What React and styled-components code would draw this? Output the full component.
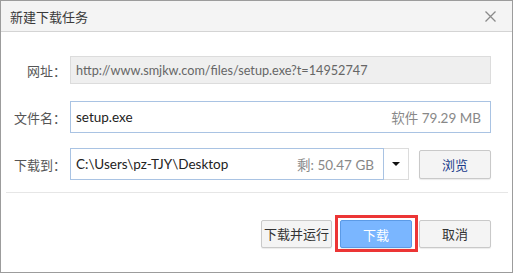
import styled, { createGlobalStyle } from "styled-components";

const Global = createGlobalStyle`
  html, body {
    margin: 0;
    padding: 0;
    background: #ffffff;
  }
  body {
    font-family: "Lato", "Noto Sans CJK SC", sans-serif;
    font-size: 13px;
  }
`;

const Dialog = styled.div`
  width: 511px;
  height: 271px;
  border: 1px solid #9c9c9c;
  background: #fff;
  display: flex;
  flex-direction: column;
`;

const Header = styled.div`
  height: 30px;
  background: #f4f4f4;
  border-bottom: 1px solid #d4d4d4;
  display: flex;
  align-items: center;
  justify-content: space-between;
  padding: 0 16px 0 9px;
`;

const Title = styled.div`
  color: #3a3a3a;
  font-size: 13px;
  font-family: "Noto Sans CJK SC", sans-serif;
`;

const Close = styled.div`
  width: 11px;
  height: 11px;
  display: flex;
  color: #8a8a8a;
`;

const Form = styled.div`
  padding: 24px 21px 0 0;
  display: flex;
  flex-direction: column;
`;

const Row = styled.div`
  display: flex;
  align-items: center;
  height: ${p => p.h}px;
  margin-bottom: ${p => p.mb || 0}px;
`;

const Label = styled.div`
  width: 69px;
  flex: none;
  text-align: right;
  padding-right: 4px;
  box-sizing: border-box;
  color: #555;
  font-family: "Noto Sans CJK SC", sans-serif;
  font-size: 13px;
`;

const Field = styled.div`
  flex: 1;
  height: 100%;
  box-sizing: border-box;
  display: flex;
  align-items: center;
  justify-content: space-between;
  padding: 0 9px 0 5px;
  border: 1px solid ${p => (p.disabled ? "#dcdcdc" : "#a9c3e3")};
  background: ${p => (p.disabled ? "#efefef" : "#fff")};
  color: ${p => (p.disabled ? "#666" : "#222")};
  font-size: ${p => (p.disabled ? 12.7 : 13.5)}px;
`;

const Info = styled.span`
  color: #888;
`;

const Select = styled.div`
  width: 25px;
  height: 100%;
  box-sizing: border-box;
  border: 1px solid #dcdcdc;
  border-left: none;
  display: flex;
  align-items: center;
  justify-content: center;
`;

const Arrow = styled.div`
  width: 0;
  height: 0;
  border-left: 4px solid transparent;
  border-right: 4px solid transparent;
  border-top: 4px solid #111;
`;

const Button = styled.button`
  width: ${p => p.w || 72}px;
  height: ${p => p.h || 28}px;
  box-sizing: border-box;
  border: 1px solid ${p => (p.primary ? "#5b9ae6" : "#c9c9c9")};
  border-radius: 2px;
  background: ${p => (p.primary ? "#7ab6ff" : "#f4f4f4")};
  color: ${p => (p.primary ? "#fff" : "#333")};
  font-family: "Noto Sans CJK SC", sans-serif;
  font-size: 13px;
  padding: 0;
  box-shadow: 0 1px 1px rgba(0, 0, 0, 0.08);
  flex: none;
`;

const Browse = styled(Button)`
  margin-left: 10px;
  color: #1a3c8a;
`;

const Divider = styled.div`
  height: 1px;
  background: #e6e6e6;
  margin: 12px 4px 0 5px;
`;

const Footer = styled.div`
  display: flex;
  justify-content: flex-end;
  align-items: center;
  padding: 22px 21px 0 0;
`;

const Highlight = styled.div`
  border: 3px solid #ec3535;
  padding: 2px 3px 1px 2px;
  margin: 0 1px 0 3px;
  display: flex;
`;

const App = () => {
  return (
    <>
      <Global />
      <Dialog>
        <Header>
          <Title>新建下载任务</Title>
          <Close>
            <svg width="11" height="11" viewBox="0 0 11 11">
              <path d="M0.5 0.5L10.5 10.5M10.5 0.5L0.5 10.5" stroke="currentColor" strokeWidth="1.3" />
            </svg>
          </Close>
        </Header>
        <Form>
          <Row h={28} mb={17}>
            <Label>网址：</Label>
            <Field disabled>http://www.smjkw.com/files/setup.exe?t=14952747</Field>
          </Row>
          <Row h={32} mb={15}>
            <Label>文件名：</Label>
            <Field>
              <span>setup.exe</span>
              <Info>软件 79.29 MB</Info>
            </Field>
          </Row>
          <Row h={32}>
            <Label>下载到：</Label>
            <Field>
              <span>C:\Users\pz-TJY\Desktop</span>
              <Info>剩: 50.47 GB</Info>
            </Field>
            <Select>
              <Arrow />
            </Select>
            <Browse h={29}>浏览</Browse>
          </Row>
        </Form>
        <Divider />
        <Footer>
          <Button w={71}>下载并运行</Button>
          <Highlight>
            <Button primary>下载</Button>
          </Highlight>
          <Button>取消</Button>
        </Footer>
      </Dialog>
    </>
  );
};

export default App;
